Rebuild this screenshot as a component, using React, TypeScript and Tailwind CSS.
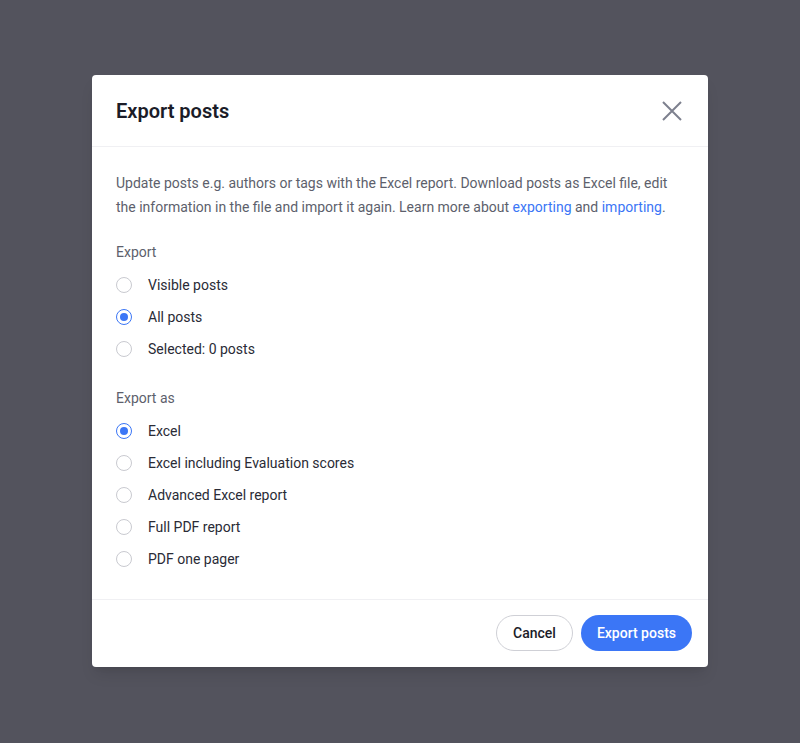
import { useState } from 'react';

const exportOptions = ['Visible posts', 'All posts', 'Selected: 0 posts'];
const formatOptions = ['Excel', 'Excel including Evaluation scores', 'Advanced Excel report', 'Full PDF report', 'PDF one pager'];

function Radio({ label, checked, onSelect }: { label: string; checked: boolean; onSelect: () => void }) {
    return (
        <button type="button" onClick={onSelect} className="flex h-8 items-center text-left">
            <span
                className={`flex h-4 w-4 items-center justify-center rounded-full border bg-white ${checked ? 'border-[#3b76f6]' : 'border-[#c9cad0]'}`}
            >
                {checked && <span className="h-2 w-2 rounded-full bg-[#3b76f6]" />}
            </span>
            <span className="ml-4 text-[14px] text-[#2a2b36]">{label}</span>
        </button>
    );
}

export default function App() {
    const [scope, setScope] = useState(1);
    const [format, setFormat] = useState(0);

    return (
        <div className="flex min-h-[743px] w-full items-start justify-center bg-[#53535d] pt-[75px]" style={{ fontFamily: 'Roboto, "Noto Sans", sans-serif' }}>
            <div className="w-[616px] rounded-[4px] bg-white shadow-lg">
                {/* header */}
                <div className="flex h-[72px] items-center justify-between border-b border-[#f0f0f3] pl-6 pr-[26px]">
                    <h2 className="text-[20px] font-semibold text-[#1b1c28]">Export posts</h2>
                    <button type="button" className="text-[#7d808e]">
                        <svg width="20" height="20" viewBox="0 0 20 20" fill="none" stroke="currentColor" strokeWidth="2">
                            <path d="M1 1L19 19M19 1L1 19" />
                        </svg>
                    </button>
                </div>

                {/* body */}
                <div className="border-b border-[#f0f0f3] px-6 pb-6 pt-6">
                    <p className="text-[14px] leading-6 text-[#5d5f6c]">
                        Update posts e.g. authors or tags with the Excel report. Download posts as Excel file, edit the information in the
                        file and import it again. Learn more about <a className="text-[#3b76f6]" href="#">exporting</a> and{' '}
                        <a className="text-[#3b76f6]" href="#">importing</a>.
                    </p>

                    <div className="mt-[21px] text-[14px] leading-6 text-[#5d5f6c]">Export</div>
                    <div className="mt-[5px] flex flex-col">
                        {exportOptions.map((o, i) => (
                            <Radio key={o} label={o} checked={scope === i} onSelect={() => setScope(i)} />
                        ))}
                    </div>

                    <div className="mt-[21px] text-[14px] leading-6 text-[#5d5f6c]">Export as</div>
                    <div className="mt-[5px] flex flex-col">
                        {formatOptions.map((o, i) => (
                            <Radio key={o} label={o} checked={format === i} onSelect={() => setFormat(i)} />
                        ))}
                    </div>
                </div>

                {/* footer */}
                <div className="flex justify-end gap-2 px-4 pb-4 pt-[15px]">
                    <button type="button" className="h-9 rounded-full border border-[#cfd0d6] px-4 text-[14px] font-medium text-[#1b1c28]">
                        Cancel
                    </button>
                    <button type="button" className="h-9 rounded-full bg-[#3b76f6] px-4 text-[14px] font-medium text-white">
                        Export posts
                    </button>
                </div>
            </div>
        </div>
    );
}
